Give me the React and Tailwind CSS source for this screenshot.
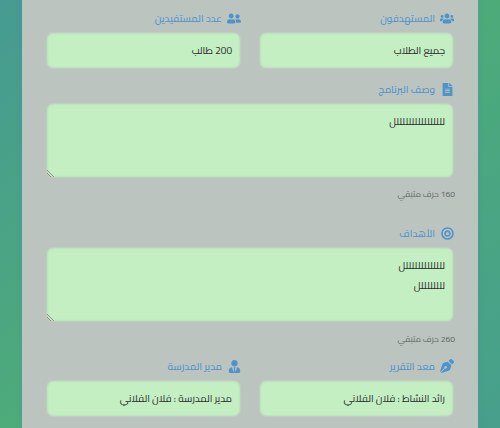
import React from "react";
import { FaUsers, FaUserFriends, FaFileAlt, FaUserTie, FaPenNib, FaBullseye } from "react-icons/fa";

const font = "font-['Cairo','Noto_Sans',sans-serif]";

function Label({ icon, children }) {
  return (
    <div className="flex items-center gap-[5px] h-[20px] mb-[4px] text-[10px] font-medium text-[#5094cb]">
      <span className="w-[14px] shrink-0 flex justify-center text-[15px] text-[#4f93cb]">{icon}</span>
      <span className="whitespace-nowrap">{children}</span>
    </div>
  );
}

const box = "rounded-[7px] bg-[#c3efc3] border border-[#c2cac5] shadow-[inset_0_0_2px_rgba(130,160,130,0.45)] text-[#2b2b2b]";

function Input({ value }) {
  return (
    <div className={`${box} h-[37px] flex items-center px-[8px] text-[10px]`}>
      {value}
    </div>
  );
}

function Area({ lines }) {
  return (
    <div className={`${box} relative h-[75px] px-[8px] pt-[8px] text-[10px] leading-[20px]`}>
      {lines.map((l, i) => <div key={i}>{l}</div>)}
      <svg className="absolute left-0 bottom-0" width="8" height="8" viewBox="0 0 8 8" stroke="#777" strokeWidth="0.7">
        <path d="M0 1 L7 8 M0 4 L4 8" />
      </svg>
    </div>
  );
}

function Counter({ children, className }) {
  return <div className={`h-[16px] text-[8.5px] leading-[16px] text-[#5f6662] -mr-[1px] ${className}`}>{children}</div>;
}

export default function App() {
  return (
    <div dir="rtl" className={`${font} w-[500px] h-[428px] overflow-hidden bg-[linear-gradient(135deg,#469a92_0%,#4eac78_50%,#4aa87e_65%,#479f8c_100%)] flex justify-center`}>
      <div className="w-[456px] h-full bg-[#bcc4c0] px-[24px] pt-[8px] shadow-[0_0_4px_rgba(70,140,180,0.6)]">
        <div className="grid grid-cols-2 gap-x-[18px]">
          <div><Label icon={<FaUsers />}>المستهدفون</Label><Input value="جميع الطلاب" /></div>
          <div><Label icon={<FaUserFriends />}>عدد المستفيدين</Label><Input value="200 طالب" /></div>
        </div>
        <div className="mt-[10px]"><Label icon={<FaFileAlt className="text-[13px]" />}>وصف البرنامج</Label><Area lines={["للللللللللللللللل"]} /></div>
        <Counter className="mt-[8px]">160 حرف متبقي</Counter>
        <div className="mt-[21px]"><Label icon={<FaBullseye className="text-[13px]" />}>الأهداف</Label><Area lines={["لللللللللللللل", "للللللللل"]} /></div>
        <Counter className="mt-[9px]">260 حرف متبقي</Counter>
        <div className="grid grid-cols-2 gap-x-[18px] mt-[9px]">
          <div><Label icon={<FaPenNib className="text-[14px]" />}>معد التقرير</Label><Input value="رائد النشاط : فلان الفلاني" /></div>
          <div><Label icon={<FaUserTie className="text-[13px]" />}>مدير المدرسة</Label><Input value="مدير المدرسة : فلان الفلاني" /></div>
        </div>
      </div>
    </div>
  );
}
